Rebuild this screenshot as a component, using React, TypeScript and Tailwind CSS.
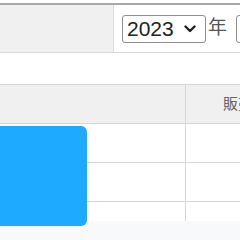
import React from 'react';

const YearSelect = ({ value }: { value: string }) => (
  <div className="flex h-[28px] w-[84px] shrink-0 items-center justify-between rounded-[3px] border border-[#8f8f8f] bg-white pl-[4px] pr-[9px] text-[21px] leading-none text-[#222]">
    <span>{value}</span>
    <svg width="12" height="8" viewBox="0 0 12 8" className="mt-[1px]">
      <path d="M1.5 1.5 L6 6 L10.5 1.5" fill="none" stroke="#222" strokeWidth="2.4" strokeLinecap="round" strokeLinejoin="round" />
    </svg>
  </div>
);

export default function App() {
  return (
    <div className="relative h-[240px] w-[240px] overflow-hidden bg-white font-['Liberation_Sans','Noto_Sans_CJK_JP',sans-serif]">
      <div className="pt-[3px]">
        <div className="flex h-[50px] border-t-2 border-b border-t-[#a8a8a8] border-b-[#d8d8d8]">
          <div className="w-[114px] shrink-0 border-r border-[#dcdcdc] bg-[#f0f0f0]" />
          <div className="flex items-center gap-[2px] pl-[8px]">
            <YearSelect value="2023" />
            <span className="text-[19px] text-[#555]">年</span>
            <div className="ml-[7px] h-[28px] w-[20px] shrink-0 rounded-[3px] border border-[#8f8f8f] bg-white" />
          </div>
        </div>
      </div>

      <div className="mt-[31px]">
        <div className="flex h-[40px] border-y border-[#d6d6d6] bg-[#f0f0f0]">
          <div className="w-[186px] shrink-0 border-r border-[#d6d6d6]" />
          <div className="flex items-center whitespace-nowrap pl-[37px] text-[15px] text-[#666]">販売</div>
        </div>
        {[0, 1].map((i) => (
          <div key={i} className="flex h-[39px] border-b border-[#d6d6d6] bg-white">
            <div className="w-[186px] shrink-0 border-r border-[#d6d6d6]" />
          </div>
        ))}
        <div className="flex h-[19px]">
          <div className="w-[186px] shrink-0 border-r border-[#d6d6d6]" />
        </div>
        <div className="h-[20px] bg-[#f8f9fb]" />
      </div>

      <div className="absolute left-0 top-[126px] h-[100px] w-[87px] rounded-r-[6px] bg-[#1eaaff]" />
    </div>
  );
}
